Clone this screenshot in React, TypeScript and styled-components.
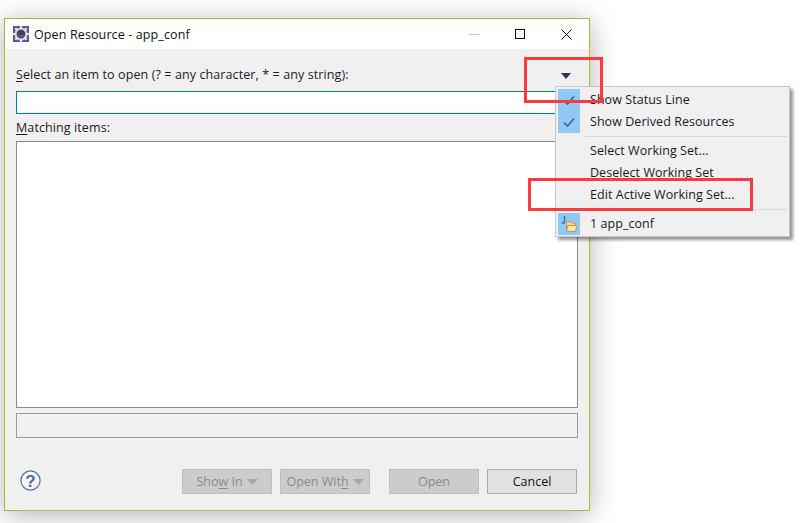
import React from "react";
import styled, { createGlobalStyle } from "styled-components";

const Global = createGlobalStyle`
  html, body { margin: 0; padding: 0; background: #fff; }
  #root { width: 805px; height: 523px; overflow: hidden; }
  * { box-sizing: border-box; }
`;

const Page = styled.div`
  position: relative;
  width: 805px;
  height: 523px;
  padding: 18px 0 0 4px;
  background: #fff;
  font-family: "Open Sans", "Noto Sans", sans-serif;
  font-size: 12.5px;
  color: #1a1a1a;
`;

const Dialog = styled.div`
  width: 586px;
  height: 493px;
  display: flex;
  flex-direction: column;
  border: 1px solid #a9bb3a;
  background: #f0f0f0;
  box-shadow: 0 4px 26px rgba(0, 0, 0, 0.3);
`;

const TitleBar = styled.div`
  height: 30px;
  flex: none;
  display: flex;
  align-items: center;
  background: #fff;
  padding-left: 8px;
  padding-right: 0;
  font-size: 12.5px;
  letter-spacing: 0.12px;
  color: #111;
`;

const TitleText = styled.span`
  flex: 1;
  margin-left: 5px;
`;

const WinButton = styled.div`
  width: 46px;
  height: 30px;
  display: flex;
  align-items: center;
  justify-content: center;
`;

const Body = styled.div`
  flex: 1;
  display: flex;
  flex-direction: column;
  padding: 0 11px 16px 11px;
`;

const PromptRow = styled.div`
  height: 20px;
  margin-top: 16px;
  display: flex;
  align-items: center;
  justify-content: space-between;
`;

const Label = styled.span`
  line-height: 18px;
  color: #1c1c1c;
  letter-spacing: 0.1px;
`;

const Under = styled.span`
  text-decoration: underline;
  text-underline-offset: 2px;
`;

const Arrow = styled.svg`
  margin-right: 7px;
  margin-top: 2px;
`;

const Input = styled.div`
  height: 23px;
  margin-top: 6px;
  background: #fff;
  border: 1px solid #0078d7;
`;

const MatchLabel = styled(Label)`
  display: block;
  margin-top: 4px;
  height: 23px;
  line-height: 20px;
`;

const List = styled.div`
  height: 267px;
  background: #fff;
  border: 1px solid #8a8a90;
`;

const StatusLine = styled.div`
  height: 25px;
  margin-top: 5px;
  border: 1px solid #9a9a9a;
  background: #f0f0f0;
`;

const Footer = styled.div`
  margin-top: auto;
  display: flex;
  align-items: center;
  padding-right: 1px;
`;

const Help = styled.svg`
  margin-left: 4px;
  margin-right: auto;
  margin-bottom: 3px;
`;

const Button = styled.div<{ $off?: boolean; $gapLeft?: number }>`
  width: 90px;
  height: 25px;
  margin-left: ${(p) => p.$gapLeft ?? 8}px;
  display: flex;
  align-items: center;
  justify-content: center;
  gap: 4px;
  background: ${(p) => (p.$off ? "#cccccc" : "#e1e1e1")};
  border: 1px solid ${(p) => (p.$off ? "#bfbfbf" : "#adadad")};
  color: ${(p) => (p.$off ? "#8a8a8a" : "#111")};
`;

const Menu = styled.div`
  position: absolute;
  left: 555px;
  top: 86px;
  width: 235px;
  height: 151px;
  padding: 2px;
  background: #f0f0f0;
  border: 1px solid #c8c8c8;
  box-shadow: 3px 3px 3px rgba(0, 0, 0, 0.42);
`;

const MenuRow = styled.div`
  height: 22px;
  display: flex;
  align-items: center;
  color: #1a1a1a;
`;

const MenuIcon = styled.div<{ $on?: boolean }>`
  width: 22px;
  height: 22px;
  flex: none;
  display: flex;
  align-items: center;
  justify-content: center;
  background: ${(p) => (p.$on ? "#90c8f6" : "transparent")};
`;

const MenuText = styled.span`
  margin-left: 10px;
  margin-bottom: 2px;
  letter-spacing: 0.05px;
`;

const Separator = styled.div`
  height: 1px;
  margin: 3px 0 3px 27px;
  background: #d7d7d7;
`;

const Callout = styled.div<{ $x: number; $y: number; $w: number; $h: number }>`
  position: absolute;
  left: ${(p) => p.$x}px;
  top: ${(p) => p.$y}px;
  width: ${(p) => p.$w}px;
  height: ${(p) => p.$h}px;
  border: 3px solid #fb3a3e;
`;

const Check = () => (
  <svg width="14" height="12" viewBox="0 0 14 12">
    <path d="M2 6.5 L5.5 10 L12 2.5" fill="none" stroke="#4a6078" strokeWidth="1.6" />
  </svg>
);

const Caret = ({ color }: { color: string }) => (
  <svg width="11" height="6" viewBox="0 0 11 6">
    <path d="M0 0 H11 L5.5 6 Z" fill={color} />
  </svg>
);

const AppIcon = () => (
  <svg width="16" height="16" viewBox="0 0 16 16">
    <rect width="16" height="16" fill="#5f4f94" />
    <circle cx="8" cy="8" r="5.4" fill="none" stroke="#cfcfd6" strokeWidth="2.4" />
    <path
      d="M8 0V3M8 13V16M0 8H3M13 8H16M2.3 2.3L4.5 4.5M11.5 11.5L13.7 13.7M13.7 2.3L11.5 4.5M4.5 11.5L2.3 13.7"
      stroke="#e8e8ec"
      strokeWidth="2"
    />
    <circle cx="8" cy="8" r="4.2" fill="#44405a" />
    <path d="M4.6 9.2 A3.8 3.8 0 0 0 11.4 9.2 Z" fill="#6a5fa0" />
  </svg>
);

const FolderIcon = () => (
  <svg width="20" height="20" viewBox="0 0 20 20">
    <path d="M5.5 2V8C5.5 9.6 3.4 9.6 2.8 8.2" fill="none" stroke="#3a78b4" strokeWidth="1.5" />
    <path d="M7.5 10 V7.5 H11.5 L13 9 H16.5 V17.5 H7.5 Z" fill="#f4d48c" stroke="#c09a4c" />
    <path d="M9 11.5 H18 L16.5 17.5 H7.5 Z" fill="#fbe6b0" stroke="#c09a4c" />
  </svg>
);

export default function App() {
  return (
    <Page>
      <Global />
      <Dialog>
        <TitleBar>
          <AppIcon />
          <TitleText>Open Resource - app_conf</TitleText>
          <WinButton>
            <svg width="10" height="1" viewBox="0 0 10 1">
              <rect width="10" height="1" fill="#c4c4c4" />
            </svg>
          </WinButton>
          <WinButton>
            <svg width="10" height="10" viewBox="0 0 10 10">
              <rect x="0.5" y="0.5" width="9" height="9" fill="none" stroke="#111" />
            </svg>
          </WinButton>
          <WinButton>
            <svg width="11" height="11" viewBox="0 0 11 11">
              <path d="M0.5 0.5 L10.5 10.5 M10.5 0.5 L0.5 10.5" stroke="#111" strokeWidth="1" />
            </svg>
          </WinButton>
        </TitleBar>
        <Body>
          <PromptRow>
            <Label>
              <Under>S</Under>elect an item to open (? = any character, * = any string):
            </Label>
            <Arrow width="10" height="6" viewBox="0 0 10 6">
              <path d="M0 0 H10 L5 6 Z" fill="#3a2f55" />
            </Arrow>
          </PromptRow>
          <Input />
          <MatchLabel>
            <Under>M</Under>atching items:
          </MatchLabel>
          <List />
          <StatusLine />
          <Footer>
            <Help width="21" height="21" viewBox="0 0 21 21">
              <circle cx="10.5" cy="10.5" r="9.6" fill="#f4f6f8" stroke="#5d7090" strokeWidth="1.2" />
              <text
                x="10.5"
                y="16.5"
                textAnchor="middle"
                fontFamily="Liberation Sans"
                fontWeight="700"
                fontSize="17"
                fill="#54688a"
              >
                ?
              </text>
            </Help>
            <Button $off>
              <span>
                Sho<Under>w</Under> In
              </span>
              <Caret color="#a8a8a8" />
            </Button>
            <Button $off>
              <span>
                Open Wit<Under>h</Under>
              </span>
              <Caret color="#a8a8a8" />
            </Button>
            <Button $off $gapLeft={19}>
              Open
            </Button>
            <Button>Cancel</Button>
          </Footer>
        </Body>
      </Dialog>
      <Menu>
        <MenuRow>
          <MenuIcon $on>
            <Check />
          </MenuIcon>
          <MenuText>Show Status Line</MenuText>
        </MenuRow>
        <MenuRow>
          <MenuIcon $on>
            <Check />
          </MenuIcon>
          <MenuText>Show Derived Resources</MenuText>
        </MenuRow>
        <Separator />
        <MenuRow>
          <MenuIcon />
          <MenuText>Select Working Set...</MenuText>
        </MenuRow>
        <MenuRow>
          <MenuIcon />
          <MenuText>Deselect Working Set</MenuText>
        </MenuRow>
        <MenuRow>
          <MenuIcon />
          <MenuText>Edit Active Working Set...</MenuText>
        </MenuRow>
        <Separator />
        <MenuRow>
          <MenuIcon $on>
            <FolderIcon />
          </MenuIcon>
          <MenuText>1 app_conf</MenuText>
        </MenuRow>
      </Menu>
      <Callout $x={524} $y={57} $w={79} $h={46} />
      <Callout $x={528} $y={178} $w={225} $h={33} />
    </Page>
  );
}
